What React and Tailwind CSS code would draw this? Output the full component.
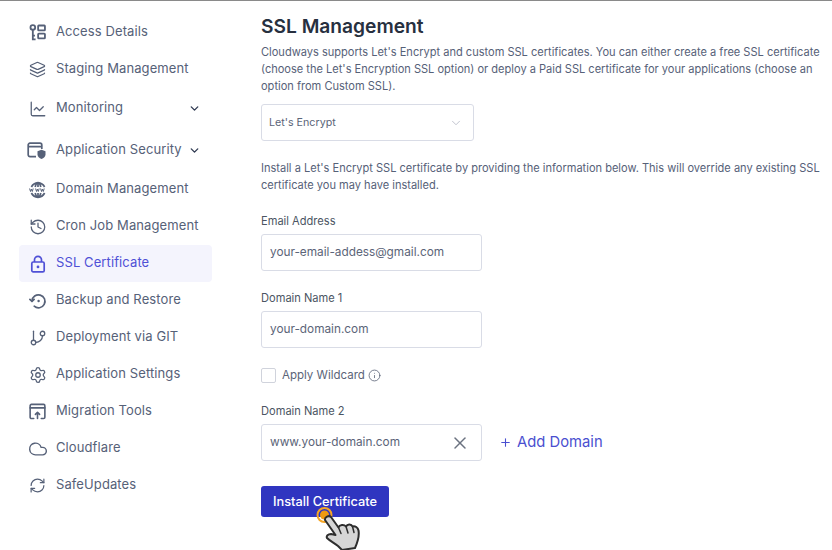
import React from "react";
import { ChevronDown, ChartLine, Cloud, GitBranch, History, Info, Layers, Plus, RefreshCw, Settings, X } from "lucide-react";

const AccessIcon = (props) => (
  <svg viewBox="0 0 16 16" fill="none" stroke="currentColor" strokeWidth="1.3" {...props}>
    <circle cx="3.6" cy="3.2" r="2.2" />
    <path d="M3.6 5.4v9h2.6M3.6 11h2" />
    <rect x="8.6" y="1.4" width="6.4" height="4.6" rx=".6" />
    <rect x="8.6" y="9" width="6.4" height="4.6" rx=".6" />
  </svg>
);

const SecurityIcon = (props) => (
  <svg viewBox="0 0 20 18" fill="none" stroke="currentColor" strokeWidth="1.3" {...props}>
    <path d="M9 14.6H3a1.8 1.8 0 0 1-1.8-1.8V3A1.8 1.8 0 0 1 3 1.2h10A1.8 1.8 0 0 1 14.8 3v4M1.2 4.6h13.6" />
    <path d="M14.5 7.8l4 1.4v3.4c0 2.2-1.8 3.7-4 4.4-2.2-.7-4-2.2-4-4.4V9.2z" fill="currentColor" stroke="none" />
  </svg>
);

const WwwIcon = (props) => (
  <svg viewBox="0 0 18 18" fill="none" stroke="currentColor" strokeWidth="1.2" {...props}>
    <path d="M2.4 6a7.4 7.4 0 0 1 13.2 0M2.4 12a7.4 7.4 0 0 0 13.2 0" />
    <path d="M6.2 6C6.8 3.4 7.8 1.7 9 1.7S11.2 3.4 11.8 6M6.2 12c.6 2.6 1.6 4.3 2.8 4.3s2.2-1.7 2.8-4.3M9 1.7V6M9 12v4.3" />
    <path d="M.6 7.5l.9 3 .9-2.4.9 2.4.9-3M6.6 7.5l.9 3 .9-2.4.9 2.4.9-3M11.6 7.5l.9 3 .9-2.4.9 2.4.9-3" strokeWidth="1" />
  </svg>
);

const BackupIcon = (props) => (
  <svg viewBox="0 0 18 18" fill="none" stroke="currentColor" strokeWidth="1.6" strokeLinecap="round" strokeLinejoin="round" {...props}>
    <path d="M3 9a6.5 6.5 0 1 1 2.2 5.2" />
    <path d="M.9 7.4L3 9.5l2.1-2.1" />
    <circle cx="9.6" cy="9" r="1.2" fill="currentColor" stroke="none" />
  </svg>
);

const MigrationIcon = (props) => (
  <svg viewBox="0 0 18 18" fill="none" stroke="currentColor" strokeWidth="1.4" strokeLinecap="round" strokeLinejoin="round" {...props}>
    <path d="M5 16.4H2.6a1.4 1.4 0 0 1-1.4-1.4V2.8a1.4 1.4 0 0 1 1.4-1.4h12.800a1.4 1.4 0 0 1 1.4 1.4V15a1.4 1.4 0 0 1-1.4 1.4H13" />
    <path d="M1.2 5.2h15.600M9 16.400V10M6.800 12L9 9.800l2.200 2.200" />
  </svg>
);

const LockIcon = (props) => (
  <svg viewBox="0 0 18 18" fill="none" stroke="currentColor" strokeWidth="1.9" strokeLinejoin="round" {...props}>
    <rect x="2.8" y="7" width="12.4" height="9.8" rx="1.4" />
    <path d="M5.5 7V4.8a3.5 3.5 0 0 1 7 0V7" />
    <circle cx="9" cy="11.9" r="1.4" fill="currentColor" stroke="none" />
  </svg>
);

const HandCursor = () => (
  <svg viewBox="0 0 56 50" className="absolute left-[49px] top-[14px] h-[50px] w-[56px]">
    <circle cx="14.5" cy="15" r="7" fill="none" stroke="#f5a524" strokeWidth="2" />
    <circle cx="14.5" cy="15" r="4.5" fill="#ee9a12" />
    <path
      d="M15 20c-.5-3 4-5 6-3l7.500 10.500c1-3 5.500-3.500 7.500-1 1.500-3 5.500-2.500 6.500 0 2.500-1 5.500 1 6 4 1 5.500-1 12-3.500 17.500L32 50l-4-4c-4-3-8-5-11-8-1-2 1-4 4-4l4.500 1z"
      fill="#d6d6d6"
      stroke="#2d2d2d"
      strokeWidth="2"
      strokeLinejoin="round"
    />
    <path d="M28.500 27.500l2.500 6M36 26.500l2 6.500M42.500 26.500l1.500 6" fill="none" stroke="#2d2d2d" strokeWidth="1.5" strokeLinecap="round" />
  </svg>
);

const menu = [
  { label: "Access Details", Icon: AccessIcon, size: "h-[17px] w-[17px]", space: "mb-0" },
  { label: "Staging Management", Icon: Layers, size: "h-[17px] w-[17px]", space: "mb-0" },
  { label: "Monitoring", Icon: ChartLine, size: "h-[18px] w-[18px]", space: "mb-[2px] mt-[2px]", arrow: true },
  { label: "Application Security", Icon: SecurityIcon, size: "h-[18px] w-[20px] -ml-[2px]", space: "mb-[2px] mt-[5px]", arrow: true },
  { label: "Domain Management", Icon: WwwIcon, size: "h-[18px] w-[18px]", space: "mb-0" },
  { label: "Cron Job Management", Icon: History, size: "h-[18px] w-[18px]", space: "mb-0" },
  { label: "SSL Certificate", Icon: LockIcon, size: "h-[18px] w-[18px]", space: "mb-0", active: true },
  { label: "Backup and Restore", Icon: BackupIcon, size: "h-[18px] w-[18px]", space: "mb-0" },
  { label: "Deployment via GIT", Icon: GitBranch, size: "h-[18px] w-[18px]", space: "mb-0" },
  { label: "Application Settings", Icon: Settings, size: "h-[18px] w-[18px]", space: "mb-0" },
  { label: "Migration Tools", Icon: MigrationIcon, size: "h-[17px] w-[17px]", space: "mb-0" },
  { label: "Cloudflare", Icon: Cloud, size: "h-[20px] w-[20px] -ml-[1px]", space: "mb-0" },
  { label: "SafeUpdates", Icon: RefreshCw, size: "h-[17px] w-[17px]", space: "mb-0" },
];

const Field = ({ label, value, children }) => (
  <div>
    <div className="mb-[4px] text-[11.100px] leading-[17px] text-[#4b5563]">{label}</div>
    <div className="flex h-[37px] w-[221px] items-center justify-between rounded-[3px] border border-[#d9dce6] bg-white pl-[8px] pr-[12px] text-[11.800px] text-[#5b6478]">
      <span>{value}</span>
      {children}
    </div>
  </div>
);

export default function App() {
  return (
    <div className="flex h-[550px] w-[832px] overflow-hidden border-t border-[#8a8a8a] bg-white font-['Inter','Liberation_Sans',sans-serif]">
      {/* Left: menu */}
      <aside className="w-[261px] shrink-0 pl-[19px] pt-[13px]">
        <nav className="w-[193px]">
          {menu.map(({ label, Icon, size, space, arrow, active }) => (
            <div
              key={label}
              className={`flex h-[37px] items-center rounded-[4px] pl-[10px] pr-[11px] text-[13px] tracking-[0.1px] ${space} ${
                active ? "bg-[#f4f4fd] text-[#4f50d6]" : "text-[#566178]"
              }`}
            >
              <span className="flex w-[27px] shrink-0 items-center">
                <Icon className={size} strokeWidth={1.7} />
              </span>
              <span className="flex-1 whitespace-nowrap pb-[2px]">{label}</span>
              {arrow && <ChevronDown className="h-[13px] w-[13px] text-[#2f3a52]" strokeWidth={2.5} />}
            </div>
          ))}
        </nav>
      </aside>

      {/* Right: form */}
      <main className="flex-1 pt-[12px]">
        <h1 className="text-[19.200px] font-semibold leading-[27px] text-[#27303f]">SSL Management</h1>
        <p className="mt-[4px] w-[565px] whitespace-nowrap text-[11.050px] leading-[17px] text-[#566178]">
          Cloudways supports Let's Encrypt and custom SSL certificates. You can either create a free SSL certificate
          <br />
          (choose the Let's Encryption SSL option) or deploy a Paid SSL certificate for your applications (choose an
          <br />
          option from Custom SSL).
        </p>
        <div className="mt-[9px] flex h-[37px] w-[213px] items-center justify-between rounded-[3px] border border-[#d9dce6] pl-[7px] pr-[10px] pt-[1px] text-[10.700px] text-[#5b6478]">
          <span>Let's Encrypt</span>
          <ChevronDown className="h-[14px] w-[14px] text-[#b8bcc8]" strokeWidth={1.5} />
        </div>
        <p className="mt-[19px] whitespace-nowrap text-[11.050px] leading-[17px] text-[#566178]">
          Install a Let's Encrypt SSL certificate by providing the information below. This will override any existing SSL
          <br />
          certificate you may have installed.
        </p>
        <div className="mt-[19px] flex flex-col">
          <Field label="Email Address" value="your-email-addess@gmail.com" />
          <div className="mt-[19px]">
            <Field label="Domain Name 1" value="your-domain.com" />
          </div>
          <div className="mt-[20px] flex h-[15px] items-center text-[11.500px] text-[#5b6478]">
            <span className="mr-[6px] h-[15px] w-[15px] rounded-[2px] border border-[#d0d3dc]" />
            <span className="mr-[3px]">Apply Wildcard</span>
            <Info className="h-[13px] w-[13px]" strokeWidth={1.5} />
          </div>
          <div className="mt-[20px] flex items-end">
            <Field label="Domain Name 2" value="www.your-domain.com">
              <X className="-mr-[1px] h-[20px] w-[20px] text-[#6b7280]" strokeWidth={1.8} />
            </Field>
            <div className="ml-[17px] flex h-[37px] items-center gap-[5px] text-[14.800px] text-[#4a4fd0]">
              <Plus className="h-[13px] w-[13px]" strokeWidth={2} />
              <span>Add Domain</span>
            </div>
          </div>
          <div className="relative mt-[25px] w-[128px]">
            <button className="flex h-[31px] w-[128px] items-center justify-center rounded-[3px] bg-[#2f35c0] text-[12.800px] font-medium text-white">
              Install Certificate
            </button>
            <HandCursor />
          </div>
        </div>
      </main>
    </div>
  );
}
